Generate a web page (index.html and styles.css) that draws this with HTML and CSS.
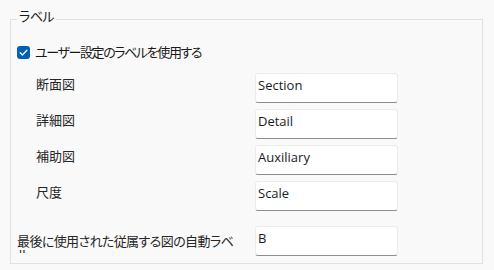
FILE: index.html
```html
<!DOCTYPE html>
<html lang="ja">
<head>
<meta charset="utf-8">
<link rel="stylesheet" href="styles.css">
</head>
<body>
<div class="group">
  <span class="legend">ラベル</span>
  <label class="check-row">
    <span class="checkbox">
      <svg width="13" height="13" viewBox="0 0 13 13"><path d="M3.2 6.8 L5.4 9 L9.9 4.3" fill="none" stroke="#fff" stroke-width="1.3" stroke-linecap="round" stroke-linejoin="round"/></svg>
    </span>
    <span class="check-text">ユーザー設定のラベルを使用する</span>
  </label>
  <div class="rows">
    <div class="label">断面図</div>
    <div class="field">Section</div>
    <div class="label">詳細図</div>
    <div class="field">Detail</div>
    <div class="label">補助図</div>
    <div class="field">Auxiliary</div>
    <div class="label">尺度</div>
    <div class="field">Scale</div>
    <div class="label long"><span class="clip">最後に使用された従属する図の自動ラベル。</span></div>
    <div class="field last">B</div>
  </div>
</div>
</body>
</html>
```

FILE: styles.css
```css
html, body {
  margin: 0;
  padding: 0;
  background: #f9f9f9;
}
body {
  font-family: "Open Sans", "Noto Sans CJK JP", sans-serif;
  font-size: 13px;
  color: #1a1a1a;
  width: 494px;
  height: 270px;
  overflow: hidden;
}
.group {
  position: relative;
  margin: 19px 11px 0 10px;
  height: 245px;
  box-sizing: border-box;
  border: 1px solid #e1e1e1;
}
.legend {
  position: absolute;
  top: -12px;
  left: 6px;
  padding: 0 2px;
  background: #f9f9f9;
  font-family: "Noto Sans CJK JP", sans-serif;
  font-feature-settings: "palt";
  letter-spacing: -0.5px;
  line-height: 16px;
}
.check-row {
  display: flex;
  align-items: center;
  gap: 5px;
  margin: 25px 0 0 6px;
  height: 14px;
}
.checkbox {
  width: 13px;
  height: 13px;
  border-radius: 3px;
  background: #005fb8;
  display: flex;
}
.check-text {
  font-family: "Noto Sans CJK JP", sans-serif;
  font-feature-settings: "palt";
  letter-spacing: -1.4px;
  line-height: 16px;
}
.rows {
  display: grid;
  grid-template-columns: 244px 143px;
  row-gap: 6px;
  margin-top: 14px;
}
.label {
  padding: 3px 0 0 25px;
  font-family: "Noto Sans CJK JP", sans-serif;
  font-feature-settings: "palt";
  line-height: 16px;
  color: #262626;
}
.label.long {
  padding: 8px 0 0 6px;
  margin-top: 9px;
}
.clip {
  display: block;
  width: 222px;
  height: 19px;
  overflow: hidden;
  line-height: 13px;
  letter-spacing: -0.6px;
}
.field {
  height: 30px;
  box-sizing: border-box;
  background: #ffffff;
  border: 1px solid #ececec;
  border-bottom: 1px solid #8d8d8d;
  border-radius: 3px;
  padding: 3px 0 0 2px;
  line-height: 16px;
  color: #1b1b1b;
}
.field.last {
  margin-top: 9px;
}
```
